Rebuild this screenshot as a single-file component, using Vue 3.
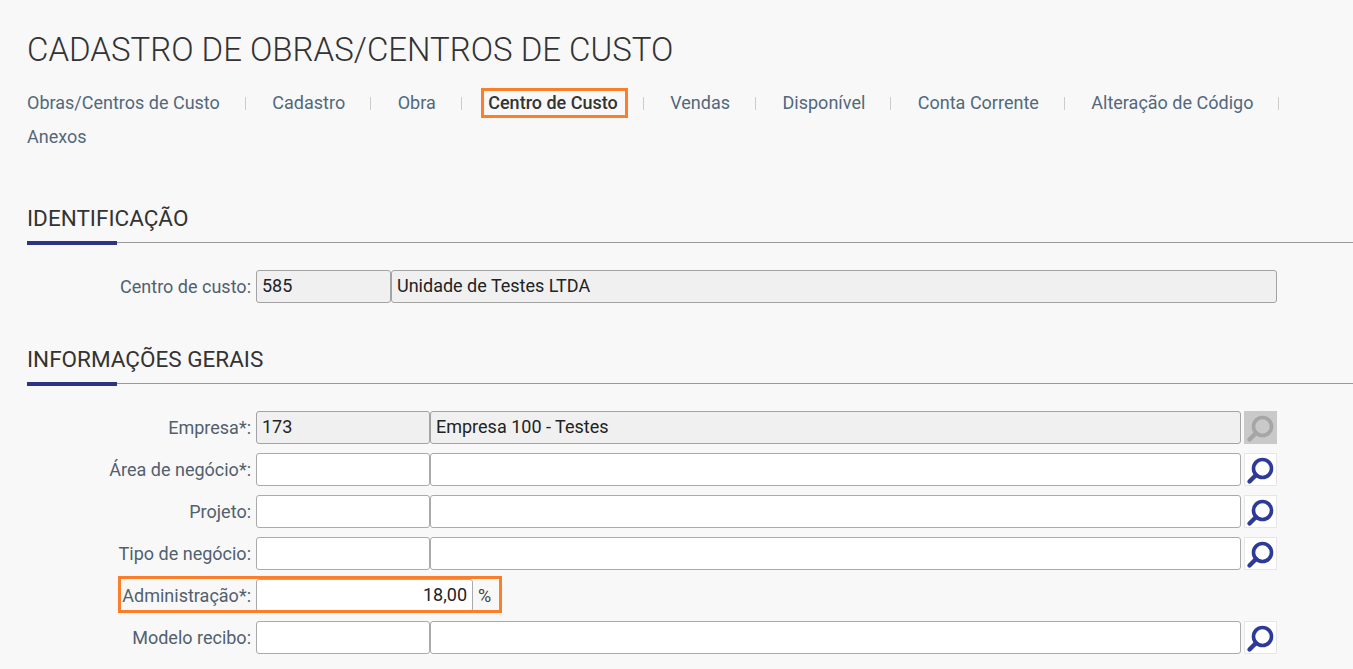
<script setup>
const nav = ['Obras/Centros de Custo','Cadastro','Obra','Centro de Custo','Vendas','Disponível','Conta Corrente','Alteração de Código','Anexos']
</script>

<template>
  <div class="page">
    <h1 class="title">CADASTRO DE OBRAS/CENTROS DE CUSTO</h1>
    <nav class="nav">
      <div v-for="(n, i) in nav" :key="n" class="cell">
        <span class="item" :class="{ active: n === 'Centro de Custo' }">{{ n }}</span>
        <span v-if="i < nav.length - 1" class="sep"></span>
      </div>
    </nav>

    <h2 class="section first">IDENTIFICAÇÃO</h2>
    <div class="rows">
      <div class="row">
        <label>Centro de custo:</label>
        <div class="f ro w135">585</div>
        <div class="f ro w886">Unidade de Testes LTDA</div>
      </div>
    </div>

    <h2 class="section second">INFORMAÇÕES GERAIS</h2>
    <div class="rows">
      <div class="row">
        <label>Empresa*:</label>
        <div class="f ro w174">173</div>
        <div class="f ro w811">Empresa 100 - Testes</div>
        <button class="search off"><svg viewBox="1 1 31 31"><circle cx="18.5" cy="15.5" r="9"/><path class="h" d="M12 22 5.5 28.5"/></svg></button>
      </div>
      <div v-for="l in ['Área de negócio*:','Projeto:','Tipo de negócio:']" :key="l" class="row">
        <label>{{ l }}</label>
        <div class="f w174"></div>
        <div class="f w811"></div>
        <button class="search"><svg viewBox="1 1 31 31"><circle cx="18.5" cy="15.5" r="9"/><path class="h" d="M12 22 5.5 28.5"/></svg></button>
      </div>
      <div class="row">
        <label>Administração*:</label>
        <div class="f w217 num">18,00</div>
        <span class="unit">%</span>
        <span class="mark"></span>
      </div>
      <div class="row">
        <label>Modelo recibo:</label>
        <div class="f w174"></div>
        <div class="f w811"></div>
        <button class="search"><svg viewBox="1 1 31 31"><circle cx="18.5" cy="15.5" r="9"/><path class="h" d="M12 22 5.5 28.5"/></svg></button>
      </div>
    </div>
  </div>
</template>

<style scoped>
.page { height: 669px; overflow: hidden; background: #f8f8f8; font-family: Roboto, sans-serif; box-sizing: border-box; padding-top: 32px; }
.title { margin: 0 0 0 27px; font-size: 33px; line-height: 36px; font-weight: 300; color: #333; }
.nav { margin: 23px 0 0 27px; display: flex; flex-wrap: wrap; row-gap: 10px; font-size: 18px; line-height: 24px; color: #52687c; }
.cell { display: flex; align-items: center; }
.item { white-space: nowrap; position: relative; }
.active { color: #333; font-weight: 500; }
.active::after { content: ""; position: absolute; left: -7px; right: -10px; top: -3px; bottom: -3px; border: 3px solid #fb7e2a; }
.sep { width: 1px; height: 13px; background: #ccc; margin: 0 26.5px 0 25px; }
.section { margin: 0 0 0 27px; font-size: 22.5px; line-height: 26px; font-weight: 400; color: #333; border-bottom: 1px solid #999; position: relative; padding-bottom: 11px; }
.section::after { content: ""; position: absolute; left: 0; bottom: -3px; width: 90px; height: 4px; background: #2e3384; }
.first { margin-top: 56px; }
.second { margin-top: 43px; }
.rows { margin-top: 27px; display: flex; flex-direction: column; gap: 9px; }
.row { position: relative; display: flex; align-items: center; height: 33px; font-size: 18px; }
label { width: 251px; margin-right: 5px; text-align: right; color: #52606e; flex: none; white-space: nowrap; }
.f { box-sizing: border-box; height: 33px; background: #fff; border: 1px solid #aaa; border-radius: 3px; padding: 0 5px; line-height: 30px; color: #222; flex: none; }
.ro { background: #f0f0f0; border-color: #a3a3a3; }
.w135 { width: 135px; }
.w886 { width: 886px; }
.w174 { width: 174px; }
.w811 { width: 811px; }
.w217 { width: 217px; margin-right: 1px; }
.num { text-align: right; }
.unit { margin-left: 4px; color: #444; }
.mark { position: absolute; left: 118px; top: -3px; width: 384px; height: 37px; box-sizing: border-box; border: 3px solid #fb7e2a; }
.search { width: 33px; height: 33px; margin-left: 3px; padding: 0; background: #fff; border: 1px solid #e6e6e6; box-sizing: border-box; flex: none; display: block; }
.search svg { display: block; width: 31px; height: 31px; fill: none; stroke: #2e3a9a; stroke-width: 3.6; stroke-linecap: round; }
.search svg .h { stroke-width: 4.4; }
.search.off { background: #c9c9c9; border-color: #c9c9c9; }
.search.off svg { stroke: #a6a6a6; }
</style>
